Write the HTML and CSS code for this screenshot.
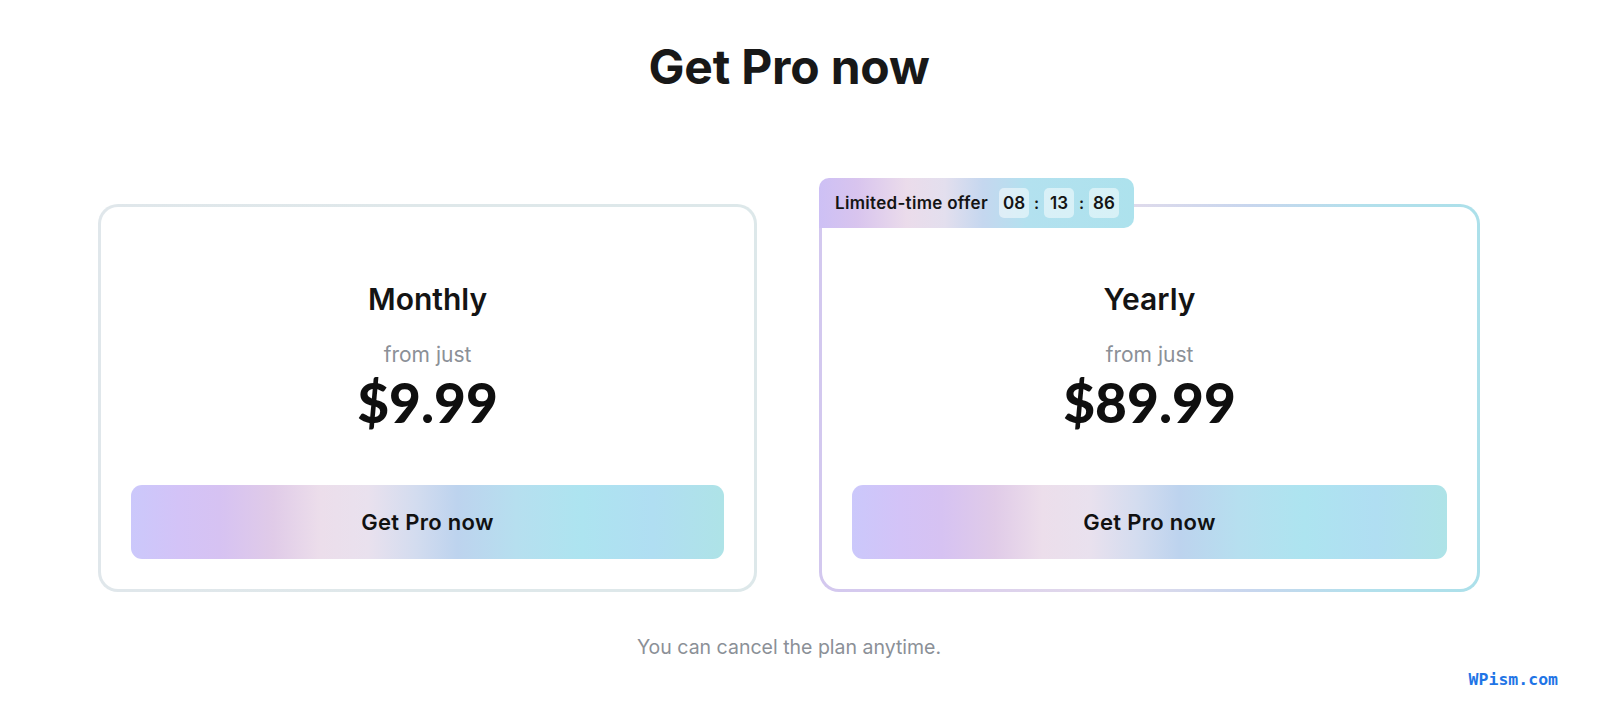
FILE: index.html
```html
<!DOCTYPE html>
<html lang="en">
<head>
<meta charset="utf-8">
<title>Get Pro now</title>
<link rel="stylesheet" href="styles.css">
</head>
<body>
<main class="page">
  <h1 class="title">Get Pro now</h1>
  <section class="plans">
    <div class="card card-monthly">
      <h2 class="plan-name">Monthly</h2>
      <p class="from">from just</p>
      <p class="price">$9.99</p>
      <button class="cta">Get Pro now</button>
    </div>
    <div class="card card-yearly">
      <div class="badge">
        <span class="badge-text">Limited-time offer</span>
        <span class="timer">
          <span class="tbox">08</span><span class="colon">:</span><span class="tbox">13</span><span class="colon">:</span><span class="tbox">86</span>
        </span>
      </div>
      <h2 class="plan-name">Yearly</h2>
      <p class="from">from just</p>
      <p class="price">$89.99</p>
      <button class="cta">Get Pro now</button>
    </div>
  </section>
  <p class="note">You can cancel the plan anytime.</p>
</main>
<div class="watermark">WPism.com</div>
</body>
</html>
```
FILE: styles.css
```css
html, body {
  margin: 0;
  padding: 0;
  background: #ffffff;
}
body {
  font-family: Inter, "Noto Sans", "Liberation Sans", sans-serif;
  color: #161616;
  height: 709px;
  overflow: hidden;
  position: relative;
}
.page {
  width: 1382px;
  margin-left: 98px;
  display: flex;
  flex-direction: column;
  align-items: center;
}
.title {
  margin: 38px 0 0;
  font-size: 48px;
  line-height: 58px;
  font-weight: 700;
  letter-spacing: -0.2px;
  color: #181818;
}
.plans {
  margin-top: 108px;
  width: 100%;
  display: grid;
  grid-template-columns: 659px 661px;
  column-gap: 62px;
}
.card {
  position: relative;
  box-sizing: border-box;
  height: 388px;
  border: 3px solid transparent;
  border-radius: 20px;
  padding: 74px 30px 30px;
  display: flex;
  flex-direction: column;
  align-items: center;
}
.card-monthly {
  background:
    linear-gradient(#fff, #fff) padding-box,
    linear-gradient(90deg, #e0e7eb, #dfe8ea 50%, #dde8ea) border-box;
}
.card-yearly {
  background:
    linear-gradient(#fff, #fff) padding-box,
    linear-gradient(90deg, #d3c8ef 0%, #dcd0ec 25%, #e2dbeb 45%, #c8d6ee 65%, #b3e0ec 82%, #ace0ea 100%) border-box;
}
.plan-name {
  margin: 0;
  font-size: 30px;
  line-height: 36px;
  font-weight: 600;
  color: #141414;
}
.from {
  margin: 26px 0 0;
  font-size: 21px;
  line-height: 24px;
  color: #8b9097;
}
.price {
  margin: 5px 0 0;
  font-family: Lato, Inter, sans-serif;
  font-size: 55px;
  line-height: 60px;
  font-weight: 900;
  color: #0f0f0f;
}
.cta {
  margin-top: 53px;
  width: 100%;
  height: 75px;
  border: 0;
  border-radius: 11px;
  font-family: inherit;
  font-size: 22px;
  font-weight: 600;
  letter-spacing: 0.3px;
  color: #111;
  background: linear-gradient(90deg,
    #cbc8fb 0%,
    #d3c3f7 8%,
    #d6c2f2 15%,
    #e0cbe8 24%,
    #ecdeeb 32%,
    #e9e1ee 40%,
    #d3dcef 48%,
    #bdd3ee 55%,
    #b6dfef 65%,
    #ade4f0 76%,
    #b0def2 88%,
    #aee3e7 100%);
}
.badge {
  position: absolute;
  top: -29px;
  left: -3px;
  height: 50px;
  box-sizing: border-box;
  padding: 10px 15px 10px 16px;
  display: flex;
  align-items: center;
  gap: 11px;
  border-radius: 10px 10px 10px 0;
  background: linear-gradient(90deg,
    #cdc0f5 0%,
    #d8c4ee 12%,
    #ebdceb 28%,
    #e3dfee 40%,
    #c5d7ef 52%,
    #b3e1ef 66%,
    #ade2ed 100%);
}
.badge-text {
  font-size: 17px;
  font-weight: 600;
  letter-spacing: 0.3px;
  color: #141414;
}
.timer {
  display: flex;
  align-items: center;
}
.tbox {
  width: 30px;
  height: 30px;
  border-radius: 5px;
  background: rgba(255, 255, 255, 0.5);
  display: flex;
  align-items: center;
  justify-content: center;
  font-size: 17px;
  font-weight: 600;
  color: #141414;
}
.colon {
  width: 15px;
  text-align: center;
  font-size: 16px;
  font-weight: 600;
  color: #141414;
}
.note {
  margin: 43px 0 0;
  font-size: 19.5px;
  line-height: 24px;
  color: #8b9097;
}
.watermark {
  position: absolute;
  right: 42px;
  top: 670px;
  font-family: "DejaVu Sans Mono", "Liberation Mono", monospace;
  font-size: 16.5px;
  line-height: 20px;
  font-weight: 700;
  color: #1f75e6;
}
```
